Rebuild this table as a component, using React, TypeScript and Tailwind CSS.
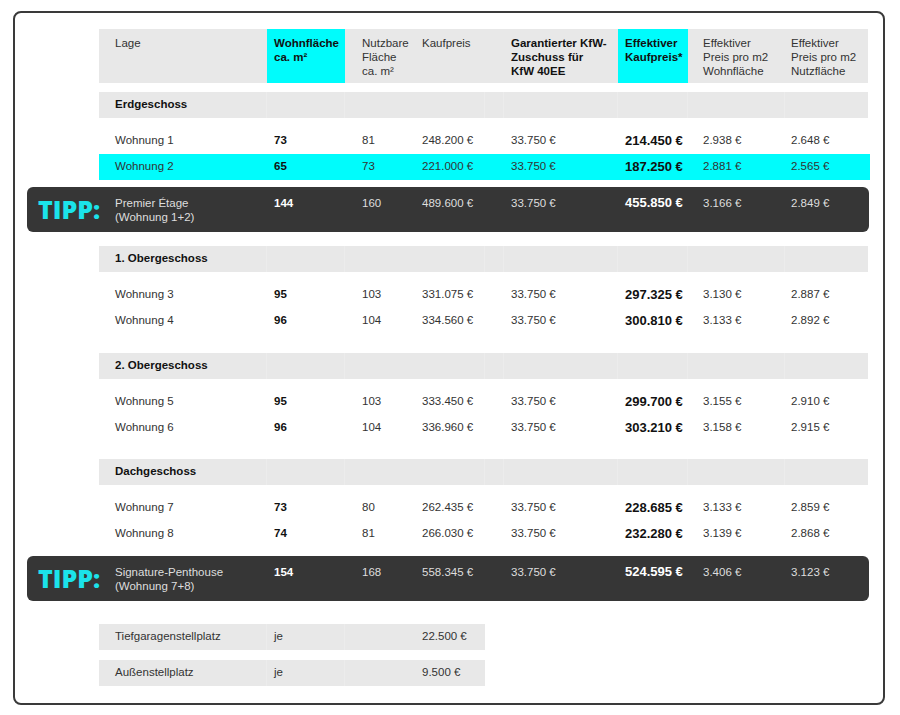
import React from "react";

const cols = [
  "w-[168px] pl-4",
  "w-[78px] pl-[7px]",
  "w-[70px] pl-[17px]",
  "w-[70px] pl-[7px]",
  "w-[19px]",
  "w-[114px] pl-[7px]",
  "w-[70px] pl-[7px]",
  "w-[97px] pl-[15px]",
  "w-[83px] pl-[6px]",
];

type Unit = {
  name: string;
  wohn: string;
  nutz: string;
  kauf: string;
  eff: string;
  effW: string;
  effN: string;
};

const floors: { title: string; units: Unit[] }[] = [
  {
    title: "Erdgeschoss",
    units: [
      { name: "Wohnung 1", wohn: "73", nutz: "81", kauf: "248.200 €", eff: "214.450 €", effW: "2.938 €", effN: "2.648 €" },
      { name: "Wohnung 2", wohn: "65", nutz: "73", kauf: "221.000 €", eff: "187.250 €", effW: "2.881 €", effN: "2.565 €" },
    ],
  },
  {
    title: "1. Obergeschoss",
    units: [
      { name: "Wohnung 3", wohn: "95", nutz: "103", kauf: "331.075 €", eff: "297.325 €", effW: "3.130 €", effN: "2.887 €" },
      { name: "Wohnung 4", wohn: "96", nutz: "104", kauf: "334.560 €", eff: "300.810 €", effW: "3.133 €", effN: "2.892 €" },
    ],
  },
  {
    title: "2. Obergeschoss",
    units: [
      { name: "Wohnung 5", wohn: "95", nutz: "103", kauf: "333.450 €", eff: "299.700 €", effW: "3.155 €", effN: "2.910 €" },
      { name: "Wohnung 6", wohn: "96", nutz: "104", kauf: "336.960 €", eff: "303.210 €", effW: "3.158 €", effN: "2.915 €" },
    ],
  },
  {
    title: "Dachgeschoss",
    units: [
      { name: "Wohnung 7", wohn: "73", nutz: "80", kauf: "262.435 €", eff: "228.685 €", effW: "3.133 €", effN: "2.859 €" },
      { name: "Wohnung 8", wohn: "74", nutz: "81", kauf: "266.030 €", eff: "232.280 €", effW: "3.139 €", effN: "2.868 €" },
    ],
  },
];

const tips: { name: [string, string]; unit: Unit }[] = [
  {
    name: ["Premier Étage", "(Wohnung 1+2)"],
    unit: { name: "", wohn: "144", nutz: "160", kauf: "489.600 €", eff: "455.850 €", effW: "3.166 €", effN: "2.849 €" },
  },
  {
    name: ["Signature-Penthouse", "(Wohnung 7+8)"],
    unit: { name: "", wohn: "154", nutz: "168", kauf: "558.345 €", eff: "524.595 €", effW: "3.406 €", effN: "3.123 €" },
  },
];

// faint cell separators in the grey rows (none between Nutzfläche and Kaufpreis)
const sep = [true, true, false, true, true, true, true, true, false];

const Gutter = ({ children }: { children?: React.ReactNode }) => (
  <div className="w-[72px] shrink-0 flex items-center pl-[11px]">{children}</div>
);

const Header = () => {
  const cells: { text: React.ReactNode; hl?: boolean }[] = [
    { text: "Lage" },
    { text: <>Wohnfläche<br />ca. m²</>, hl: true },
    { text: <>Nutzbare<br />Fläche<br />ca. m²</> },
    { text: "Kaufpreis" },
    { text: "" },
    { text: <>Garantierter KfW-<br />Zuschuss für<br />KfW 40EE</> },
    { text: <>Effektiver<br />Kaufpreis*</>, hl: true },
    { text: <>Effektiver<br />Preis pro m2<br />Wohnfläche</> },
    { text: <>Effektiver<br />Preis pro m2<br />Nutzfläche</> },
  ];
  return (
    <div className="flex">
      <Gutter />
      <div className="flex bg-[#e8e8e8] h-[54px]">
        {cells.map((c, i) => (
          <div
            key={i}
            className={`${cols[i]} pt-[7px] leading-[14px] ${c.hl ? "bg-[#00fcfc]" : ""} ${
              i === 1 || i === 5 || i === 6 ? "font-bold text-[#111]" : "text-[#333]"
            }`}
          >
            {c.text}
          </div>
        ))}
      </div>
    </div>
  );
};

const GrayRow = ({ cells, className = "" }: { cells: React.ReactNode[]; className?: string }) => (
  <div className={`flex ${className}`}>
    <Gutter />
    <div className="flex bg-[#e8e8e8] h-[26px]">
      {cells.map((c, i) => (
        <div
          key={i}
          className={`${cols[i]} flex items-center ${
            sep[i] && i < cells.length - 1 ? "border-r border-[#ececec]" : ""
          }`}
        >
          {c}
        </div>
      ))}
    </div>
  </div>
);

const UnitRow = ({ u, hl }: { u: Unit; hl?: boolean }) => {
  const cells = [u.name, u.wohn, u.nutz, u.kauf, "", "33.750 €", u.eff, u.effW, u.effN];
  return (
    <div className="flex">
      <Gutter />
      <div className={`flex h-[26px] w-[771px] ${hl ? "bg-[#00fcfc]" : ""}`}>
        {cells.map((c, i) => (
          <div
            key={i}
            className={`${cols[i]} flex items-center ${
              i === 1 ? "font-bold text-[#111]" : i === 6 ? "font-bold text-[13px] text-[#111]" : "text-[#333]"
            }`}
          >
            {c}
          </div>
        ))}
      </div>
    </div>
  );
};

const TipRow = ({ name, u, className = "" }: { name: [string, string]; u: Unit; className?: string }) => {
  const cells: React.ReactNode[] = [
    <>{name[0]}<br />{name[1]}</>,
    u.wohn,
    u.nutz,
    u.kauf,
    "",
    "33.750 €",
    u.eff,
    u.effW,
    u.effN,
  ];
  return (
    <div className={`flex bg-[#363636] rounded-[6px] h-[45px] w-[842px] ${className}`}>
      <Gutter>
        <span className="font-['Open_Sans',sans-serif] font-extrabold text-[25px] leading-none text-[#1be3ea]">
          TIPP:
        </span>
      </Gutter>
      <div className="flex">
        {cells.map((c, i) => (
          <div
            key={i}
            className={`${cols[i]} pt-[9px] leading-[14px] ${
              i === 1 ? "font-bold text-white" : i === 6 ? "font-bold text-[13px] text-white" : "text-[#dedede]"
            }`}
          >
            {c}
          </div>
        ))}
      </div>
    </div>
  );
};

const floorMargins = ["mt-[9px]", "mt-[14px]", "mt-[19px]", "mt-[18px]"];

export default function App() {
  return (
    <div className="min-h-[715px] w-[900px] bg-white pl-[13px] pt-[11px] font-['Liberation_Sans',Arial,sans-serif] text-[11.5px]">
      <div className="w-[872px] border-2 border-[#3a3a3a] rounded-[8px] pl-[12px] pt-[16px] pb-[17px]">
        <Header />
        {floors.map((f, fi) => (
          <React.Fragment key={f.title}>
            <GrayRow
              className={floorMargins[fi]}
              cells={[<span className="font-bold text-[#111]">{f.title}</span>, "", "", "", "", "", "", "", ""]}
            />
            <div className="mt-[10px]">
              {f.units.map((u) => (
                <UnitRow key={u.name} u={u} hl={u.name === "Wohnung 2"} />
              ))}
            </div>
            {fi === 0 && <TipRow className="mt-[7px]" name={tips[0].name} u={tips[0].unit} />}
            {fi === 3 && <TipRow className="mt-[9px]" name={tips[1].name} u={tips[1].unit} />}
          </React.Fragment>
        ))}
        <GrayRow
          className="mt-[23px] text-[#333]"
          cells={["Tiefgaragenstellplatz", "je", "", "22.500 €"]}
        />
        <GrayRow className="mt-[10px] text-[#333]" cells={["Außenstellplatz", "je", "", "9.500 €"]} />
      </div>
    </div>
  );
}
